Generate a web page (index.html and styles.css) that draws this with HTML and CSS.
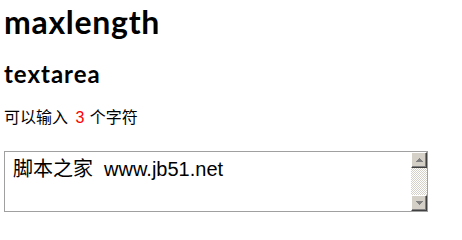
FILE: index.html
```html
<!DOCTYPE html>
<html lang="zh-CN">
<head>
<meta charset="utf-8">
<title>maxlength</title>
<link rel="stylesheet" href="styles.css">
</head>
<body>
<h1 class="title">maxlength</h1>
<h2 class="subtitle">textarea</h2>
<p class="hint">可以输入 <span class="count">3</span> 个字符</p>
<div class="field">
  <textarea class="input">脚本之家  www.jb51.net</textarea>
  <div class="scrollbar">
    <div class="btn"><svg width="7" height="4" viewBox="0 0 7 4"><path d="M3 0h1v1h1v1h1v1h1v1H0V3h1V2h1V1h1z" fill="#808080"/></svg></div>
    <div class="track"></div>
    <div class="btn"><svg width="7" height="4" viewBox="0 0 7 4"><path d="M0 0h7v1H6v1H5v1H4v1H3V3H2V2H1V1H0z" fill="#808080"/></svg></div>
  </div>
</div>
</body>
</html>
```

FILE: styles.css
```css
html, body {
  background: #fff;
}
body {
  margin: 0 0 0 4px;
  color: #000;
  font-family: "Liberation Sans", "Noto Sans CJK SC", sans-serif;
}
.title {
  font: 700 32px/38px Lato, "Liberation Sans", sans-serif;
  letter-spacing: 0.7px;
  margin: 3px 0 18px 0;
}
.subtitle {
  font: 700 24px/29px Lato, "Liberation Sans", sans-serif;
  letter-spacing: 1px;
  margin: 0 0 20px 0;
}
.hint {
  font-size: 16px;
  line-height: 20px;
  margin: 0 0 23px 0;
}
.count {
  color: #f00;
  margin: 0 1px 0 3px;
}
.field {
  display: flex;
  width: 424px;
  height: 61px;
  box-sizing: border-box;
  border: 1px solid #a0a0a0;
}
.input {
  flex: 1;
  border: 0;
  margin: 0;
  padding: 6px 8px;
  font: 20px/23px "Liberation Sans", "Noto Sans CJK SC", sans-serif;
  resize: none;
  outline: none;
  overflow: hidden;
  background: #fff;
  color: #000;
}
.scrollbar {
  width: 16px;
  display: flex;
  flex-direction: column;
}
.btn {
  height: 16px;
  box-sizing: border-box;
  background: #d4d0c8;
  border-top: 1px solid #fff;
  border-left: 1px solid #fff;
  border-right: 1px solid #404040;
  border-bottom: 1px solid #404040;
  box-shadow: inset -1px -1px #808080;
  display: flex;
  align-items: center;
  justify-content: center;
}
.btn svg {
  display: block;
}
.track {
  flex: 1;
  background: repeating-conic-gradient(#d4d0c8 0 25%, #fff 0 50%) 0 0 / 2px 2px;
}
```
